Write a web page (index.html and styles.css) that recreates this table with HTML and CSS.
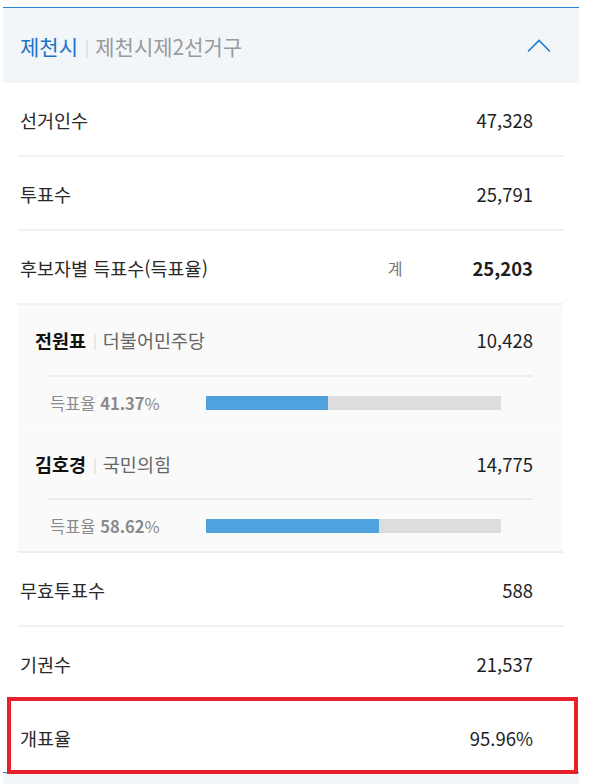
FILE: index.html
```html
<!DOCTYPE html>
<html lang="ko">
<head>
<meta charset="utf-8">
<link rel="stylesheet" href="styles.css">
</head>
<body>
<div class="page">
  <section class="district">
    <div class="district-head">
      <div class="district-title">
        <span class="city">제천시</span><span class="bar">|</span><span class="area">제천시제2선거구</span>
      </div>
      <svg class="chevron" width="24" height="14" viewBox="0 0 24 14">
        <polyline points="1,12.5 12,1.5 23,12.5" fill="none" stroke="#1f7bd0" stroke-width="1.6"/>
      </svg>
    </div>
    <div class="rows">
      <div class="row"><span class="label">선거인수</span><span class="value">47,328</span></div>
      <div class="row"><span class="label">투표수</span><span class="value">25,791</span></div>
      <div class="row"><span class="label">후보자별 득표수(득표율)</span><span class="total"><span class="gye">계</span><span class="value strong">25,203</span></span></div>
      <div class="candidates">
        <div class="cand">
          <div class="cand-top"><span class="cname"><b>전원표</b><span class="bar">|</span><span class="party">더불어민주당</span></span><span class="value">10,428</span></div>
          <div class="cand-rate"><span class="rate">득표율 <b>41.37</b>%</span><div class="track"><div class="fill" style="width:41.37%"></div></div></div>
        </div>
        <div class="cand">
          <div class="cand-top"><span class="cname"><b>김호경</b><span class="bar">|</span><span class="party">국민의힘</span></span><span class="value">14,775</span></div>
          <div class="cand-rate"><span class="rate">득표율 <b>58.62</b>%</span><div class="track"><div class="fill" style="width:58.62%"></div></div></div>
        </div>
      </div>
      <div class="row"><span class="label">무효투표수</span><span class="value">588</span></div>
      <div class="row"><span class="label">기권수</span><span class="value">21,537</span></div>
      <div class="row last marked"><span class="label">개표율</span><span class="value">95.96%</span></div>
    </div>
  </section>
  <section class="district next">
    <div class="district-head short"></div>
  </section>
</div>
</body>
</html>
```
FILE: styles.css
```css
html, body {
  margin: 0;
  padding: 0;
  background: #fff;
}
body {
  font-family: "Noto Sans CJK KR", "Noto Sans", sans-serif;
  color: #222;
}
.page {
  width: 576px;
  padding: 7px 0 0 3px;
}
.district {
  border-top: 1px solid #2a82d0;
}
.district-head {
  height: 75px;
  background: #f2f6f9;
  display: flex;
  align-items: center;
  justify-content: space-between;
  padding: 0 28px 0 17px;
}
.district-head.short {
  height: 12px;
}
.district-title {
  font-size: 21px;
  display: flex;
  align-items: center;
  margin-top: 1px;
}
.city {
  color: #1a74c9;
}
.district-title .bar {
  color: #d6d6d6;
  font-size: 16px;
  margin: 0 6px 0 7px;
}
.area {
  color: #9a9a9a;
}
.chevron {
  display: block;
  margin-top: 1px;
}
.rows {
  margin: 0 16px 0 15px;
}
.row {
  height: 70px;
  padding: 2px 30px 0 2px;
  display: flex;
  align-items: center;
  justify-content: space-between;
  border-bottom: 2px solid #f1f1f1;
  font-size: 18.5px;
}
.row.last {
  border-bottom: none;
  height: 69px;
}
.label {
  color: #2a2a2a;
}
.value {
  color: #1e1e1e;
  font-size: 18.5px;
}
.value.strong {
  font-weight: 700;
}
.total {
  display: flex;
  align-items: center;
}
.gye {
  color: #777;
  font-size: 16px;
  margin-left: 2px;
  margin-right: 70px;
}
.candidates {
  background: #fafafa;
  border-bottom: 2px solid #ededed;
}
.cand + .cand {
  border-top: 1px solid #fff;
}
.cand-top {
  height: 70px;
  display: flex;
  align-items: center;
  justify-content: space-between;
  padding: 0 30px 0 17px;
  font-size: 18.5px;
}
.cand + .cand .cand-top {
  height: 69px;
}
.cname {
  display: flex;
  align-items: center;
}
.cname b {
  color: #111;
  font-weight: 700;
}
.cname .bar {
  color: #d8d8d8;
  font-size: 14px;
  margin: 0 6px 0 7px;
}
.party {
  color: #666;
}
.cand-rate {
  margin: 0 30px 0 30px;
  border-top: 2px solid #ececec;
  height: 51px;
  display: flex;
  align-items: center;
  padding-left: 2px;
}
.rate {
  color: #8a8a8a;
  font-size: 16.5px;
  width: 156px;
}
.rate b {
  font-weight: 700;
}
.track {
  width: 295px;
  height: 14px;
  background: #dddddd;
  margin-top: 1px;
}
.fill {
  height: 100%;
  background: #4ea2dd;
}
.marked {
  position: relative;
}
.marked::after {
  content: "";
  position: absolute;
  left: -11px;
  right: -15px;
  top: -4px;
  bottom: -2px;
  border: 4px solid #e8202a;
  pointer-events: none;
}
```
